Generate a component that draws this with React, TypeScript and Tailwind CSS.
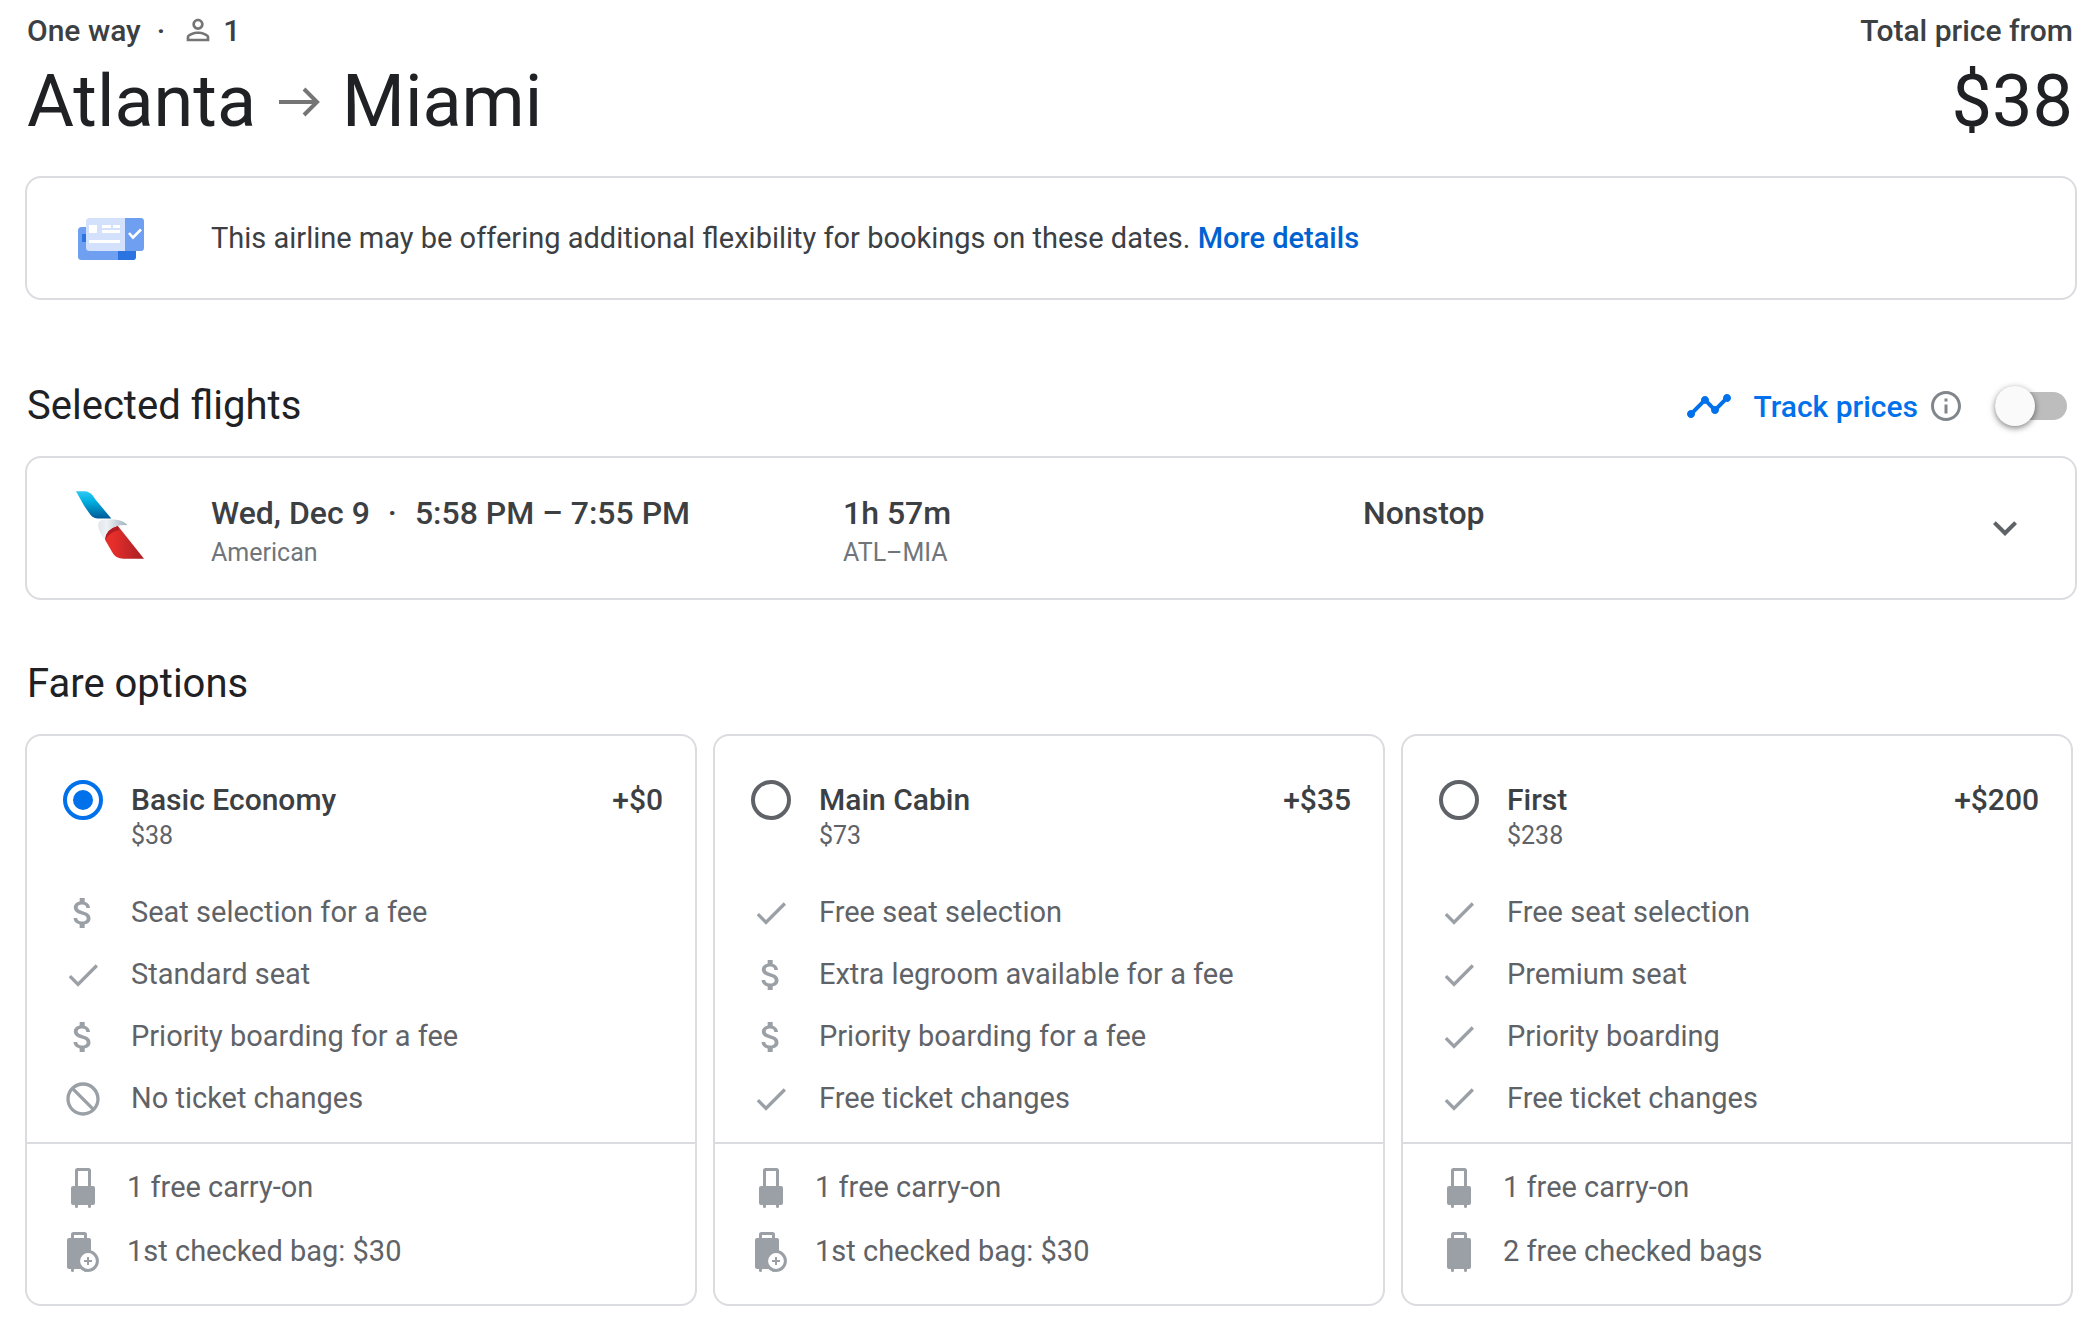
import { FunctionComponent, JSX, useState } from "react";

type Feature = { icon: "fee" | "included" | "none"; text: string };
type Bag = { icon: "carry" | "checked" | "checkedFee"; text: string };

interface Fare {
  id: string;
  name: string;
  price: string;
  extra: string;
  features: Feature[];
  bags: Bag[];
}

const fares: Fare[] = [
  {
    id: "basic",
    name: "Basic Economy",
    price: "$38",
    extra: "+$0",
    features: [
      { icon: "fee", text: "Seat selection for a fee" },
      { icon: "included", text: "Standard seat" },
      { icon: "fee", text: "Priority boarding for a fee" },
      { icon: "none", text: "No ticket changes" },
    ],
    bags: [
      { icon: "carry", text: "1 free carry-on" },
      { icon: "checkedFee", text: "1st checked bag: $30" },
    ],
  },
  {
    id: "main",
    name: "Main Cabin",
    price: "$73",
    extra: "+$35",
    features: [
      { icon: "included", text: "Free seat selection" },
      { icon: "fee", text: "Extra legroom available for a fee" },
      { icon: "fee", text: "Priority boarding for a fee" },
      { icon: "included", text: "Free ticket changes" },
    ],
    bags: [
      { icon: "carry", text: "1 free carry-on" },
      { icon: "checkedFee", text: "1st checked bag: $30" },
    ],
  },
  {
    id: "first",
    name: "First",
    price: "$238",
    extra: "+$200",
    features: [
      { icon: "included", text: "Free seat selection" },
      { icon: "included", text: "Premium seat" },
      { icon: "included", text: "Priority boarding" },
      { icon: "included", text: "Free ticket changes" },
    ],
    bags: [
      { icon: "carry", text: "1 free carry-on" },
      { icon: "checked", text: "2 free checked bags" },
    ],
  },
];

const featurePaths: Record<Feature["icon"], string> = {
  fee: "M11.8 10.9c-2.27-.59-3-1.2-3-2.15 0-1.09 1.01-1.85 2.7-1.85 1.78 0 2.44.85 2.5 2.1h2.21c-.07-1.72-1.12-3.3-3.21-3.81V3h-3v2.16c-1.94.42-3.5 1.68-3.5 3.61 0 2.31 1.91 3.46 4.7 4.13 2.5.6 3 1.48 3 2.41 0 .69-.49 1.79-2.7 1.79-2.06 0-2.87-.92-2.98-2.1h-2.2c.12 2.19 1.76 3.42 3.68 3.83V21h3v-2.15c1.95-.37 3.5-1.5 3.5-3.55 0-2.84-2.43-3.81-4.7-4.4z",
  included: "M9 16.17L4.83 12l-1.42 1.41L9 19 21 7l-1.41-1.41z",
  none: "M12 2c5.52 0 10 4.48 10 10s-4.48 10-10 10S2 17.52 2 12 6.48 2 12 2zM20 12c0-4.42-3.58-8-8-8-1.85 0-3.55.63-4.9 1.69L18.31 16.9C19.37 15.55 20 13.85 20 12zm-8 8c1.85 0 3.55-.63 4.9-1.69L5.69 7.1C4.63 8.45 4 10.15 4 12c0 4.42 3.58 8 8 8z",
};

const FeatureIcon: FunctionComponent<{ icon: Feature["icon"] }> = ({
  icon,
}): JSX.Element => (
  <svg
    viewBox="0 0 24 24"
    className="size-10 shrink-0 fill-[#9aa0a6]"
    aria-hidden="true"
  >
    <path d={featurePaths[icon]} />
  </svg>
);

const BagIcon: FunctionComponent<{ icon: Bag["icon"] }> = ({
  icon,
}): JSX.Element => {
  if (icon === "carry") {
    return (
      <svg
        viewBox="0 0 40 40"
        className="size-10 shrink-0 fill-[#9aa0a6]"
        aria-hidden="true"
      >
        <path d="M14.5 0h11a2.5 2.5 0 0 1 2.5 2.5V18h2a2 2 0 0 1 2 2v15a2 2 0 0 1-2 2h-2v1.5a1.5 1.5 0 0 1-3 0V37H15v1.5a1.5 1.5 0 0 1-3 0V37h-2a2 2 0 0 1-2-2V20a2 2 0 0 1 2-2h2V2.5A2.5 2.5 0 0 1 14.5 0zM15 3v15h10V3z" />
      </svg>
    );
  }
  return (
    <svg
      viewBox="0 0 40 40"
      className="size-10 shrink-0 fill-[#9aa0a6]"
      aria-hidden="true"
    >
      <g transform={icon === "checkedFee" ? "translate(-4 0)" : undefined}>
        <path d="M14.5 0h11A2.5 2.5 0 0 1 28 2.5V6h2a2 2 0 0 1 2 2v27a2 2 0 0 1-2 2h-2v1.5a1.5 1.5 0 0 1-3 0V37H15v1.5a1.5 1.5 0 0 1-3 0V37h-2a2 2 0 0 1-2-2V8a2 2 0 0 1 2-2h2V2.5A2.5 2.5 0 0 1 14.5 0zM15 3v3h10V3z" />
      </g>
      {icon === "checkedFee" && (
        <>
          <circle
            cx="25"
            cy="29"
            r="9.4"
            fill="#fff"
            stroke="#9aa0a6"
            strokeWidth="3"
          />
          <path d="M24 25h2v3h3v2h-3v3h-2v-3h-3v-2h3z" />
        </>
      )}
    </svg>
  );
};

const TicketIcon: FunctionComponent = (): JSX.Element => (
  <svg viewBox="0 0 66 42" className="h-[42px] w-[66px]" aria-hidden="true">
    <rect y="9" width="58" height="33" rx="3.5" fill="#6f9ff0" />
    <path d="M40 30h18v8.5a3.5 3.5 0 0 1-3.5 3.5H40z" fill="#2a73e0" />
    <path d="M4 16h5v8H4z" fill="#2a73e0" />
    <rect x="8" width="58" height="33" rx="3.5" fill="#d3e1fc" />
    <path
      d="M47 0h15.5A3.5 3.5 0 0 1 66 3.5v26a3.5 3.5 0 0 1-3.5 3.5H47z"
      fill="#6f9ff0"
    />
    <path
      d="M11 7h8v8h-8zM24 7h9v3h-9zM35 7h7v3h-7zM24 12h18v3H24zM11 22h31v3H11z"
      fill="#fff"
    />
    <path
      d="M51 15l4 4.5 8-8"
      fill="none"
      stroke="#fff"
      strokeWidth="2.6"
    />
  </svg>
);

const AmericanLogo: FunctionComponent = (): JSX.Element => (
  <svg
    viewBox="47 33 206 204"
    className="size-[68px]"
    role="img"
    aria-label="American"
  >
    <defs>
      <linearGradient id="aaBlue" x1="0" y1="0" x2="0" y2="1">
        <stop offset="0" stopColor="#30c8f4" />
        <stop offset="0.35" stopColor="#00b2e3" />
        <stop offset="1" stopColor="#005a96" />
      </linearGradient>
      <linearGradient id="aaGrey" x1="0" y1="0" x2="1" y2="0">
        <stop offset="0" stopColor="#dfe6ec" />
        <stop offset="0.3" stopColor="#eff2f5" />
        <stop offset="1" stopColor="#9db0bb" />
      </linearGradient>
      <linearGradient id="aaRed" x1="0" y1="0" x2="1" y2="0">
        <stop offset="0.2" stopColor="#e62e2b" />
        <stop offset="1" stopColor="#a81f24" />
      </linearGradient>
    </defs>
    <path
      d="M47 33H73Q88 34 97 45Q102 52 106 58L154 115H112Q96 113 88 100Q76 84 69 72Z"
      fill="url(#aaBlue)"
    />
    <path
      d="M114 138Q112 119 136 118H164Q194 121 203 136Q188 133 174 138Q140 146 135 180Q118 160 114 138Z"
      fill="url(#aaGrey)"
    />
    <path
      d="M174 138L253 237H190Q169 236 159 221L135 180Q138 148 174 138Z"
      fill="url(#aaRed)"
    />
    <path d="M174 138Q137 147 135 180Q149 155 179 150Z" fill="#b01c22" />
  </svg>
);

const FareCard: FunctionComponent<{
  fare: Fare;
  selected: boolean;
  onSelect: () => void;
}> = ({ fare, selected, onSelect }): JSX.Element => {
  return (
    <div className="flex flex-col rounded-2xl border-2 border-[#dadce0]">
      <div className="flex flex-col pt-11 pr-8 pb-3 pl-9">
        <label className="flex cursor-pointer items-start gap-7">
          <input
            type="radio"
            name="fare"
            checked={selected}
            onChange={onSelect}
            className="size-10 shrink-0 appearance-none rounded-full border-4 border-[#5f6368] checked:border-[#0071eb] checked:bg-[#0071eb] checked:bg-clip-content checked:p-[6px]"
          />
          <span className="flex grow flex-col">
            <span className="flex justify-between text-[30px] leading-10 font-medium text-[#3c4043]">
              <span>{fare.name}</span>
              <span>{fare.extra}</span>
            </span>
            <span className="text-[25px] leading-8 text-[#5f6368]">
              {fare.price}
            </span>
          </span>
        </label>
        <ul className="flex flex-col pt-[30px] text-[#5f6368]">
          {fare.features.map((feature) => (
            <li
              key={feature.text}
              className="flex h-[62px] items-center gap-7 text-[29px]"
            >
              <FeatureIcon icon={feature.icon} />
              {feature.text}
            </li>
          ))}
        </ul>
      </div>
      <ul className="flex flex-col border-t-2 border-[#dadce0] px-9 pt-3 pb-5 text-[#5f6368]">
        {fare.bags.map((bag) => (
          <li
            key={bag.text}
            className="flex h-16 items-center gap-6 text-[29px]"
          >
            <BagIcon icon={bag.icon} />
            {bag.text}
          </li>
        ))}
      </ul>
    </div>
  );
};

export default function App(): JSX.Element {
  const [fare, setFare] = useState<string>("basic");
  const [tracking, setTracking] = useState<boolean>(false);

  return (
    <main className="w-full bg-white pr-[13px] pb-3 pl-[25px] font-['Roboto',sans-serif] text-[#202124]">
      <header className="flex justify-between pt-3 pr-1 pl-0.5">
        <div className="flex flex-col">
          <div className="flex h-9 items-center text-[30px] font-medium text-[#3c4043]">
            <span>One way</span>
            <span className="px-4">·</span>
            <svg
              viewBox="0 0 24 24"
              className="size-[34px] fill-[#757575]"
              aria-hidden="true"
            >
              <path d="M12 5.9c1.16 0 2.1.94 2.1 2.1s-.94 2.1-2.1 2.1S9.9 9.16 9.9 8s.94-2.1 2.1-2.1m0 9c2.97 0 6.1 1.46 6.1 2.1v1.1H5.9V17c0-.64 3.13-2.1 6.1-2.1M12 4C9.79 4 8 5.79 8 8s1.79 4 4 4 4-1.79 4-4-1.79-4-4-4zm0 9c-2.67 0-8 1.34-8 4v3h16v-3c0-2.66-5.33-4-8-4z" />
            </svg>
            <span className="pl-2">1</span>
          </div>
          <h1 className="flex h-[108px] items-center gap-[22px] text-7xl">
            <span>Atlanta</span>
            <svg
              viewBox="0 0 42 30"
              className="h-[30px] w-[42px] fill-none stroke-[#757575] stroke-[4]"
              aria-hidden="true"
            >
              <path d="M1 15H39M26 2L39 15L26 28" />
            </svg>
            <span>Miami</span>
          </h1>
        </div>
        <div className="flex flex-col items-end">
          <span className="flex h-9 items-center text-[30px] font-medium text-[#3c4043]">
            Total price from
          </span>
          <span className="flex h-[108px] items-center text-7xl">$38</span>
        </div>
      </header>

      <section className="mt-5 flex h-[124px] items-center gap-[67px] rounded-2xl border-2 border-[#dadce0] pt-0.5 pl-[51px] text-[29px] text-[#3c4043]">
        <TicketIcon />
        <p>
          This airline may be offering additional flexibility for bookings on
          these dates.{" "}
          <a href="#details" className="font-medium text-[#0062d1]">
            More details
          </a>
        </p>
      </section>

      <div className="mt-[78px] flex h-14 items-center justify-between pr-[10px] pl-0.5">
        <h2 className="text-[40px]">Selected flights</h2>
        <div className="flex items-center">
          <svg
            viewBox="0 0 24 24"
            className="size-12 fill-[#0071eb]"
            aria-hidden="true"
          >
            <path d="M23 8c0 1.1-.9 2-2 2-.18 0-.35-.02-.51-.07l-3.56 3.55c.05.16.07.34.07.52 0 1.1-.9 2-2 2s-2-.9-2-2c0-.18.02-.36.07-.52l-2.55-2.55c-.16.05-.34.07-.52.07s-.36-.02-.52-.07l-4.55 4.56c.05.16.07.33.07.51 0 1.1-.9 2-2 2s-2-.9-2-2 .9-2 2-2c.18 0 .35.02.51.07l4.56-4.55C8.02 9.36 8 9.18 8 9c0-1.1.9-2 2-2s2 .9 2 2c0 .18-.02.36-.07.52l2.55 2.55c.16-.05.34-.07.52-.07s.36.02.52.07l3.55-3.56C19.02 8.35 19 8.18 19 8c0-1.1.9-2 2-2s2 .9 2 2z" />
          </svg>
          <label
            htmlFor="track"
            className="cursor-pointer pl-5 text-[30px] font-medium text-[#0071eb]"
          >
            Track prices
          </label>
          <button
            type="button"
            aria-label="About price tracking"
            className="ml-2.5 cursor-pointer"
          >
            <svg
              viewBox="0 0 24 24"
              className="size-9 fill-[#80868b]"
              aria-hidden="true"
            >
              <path d="M11 7h2v2h-2zm0 4h2v6h-2zm1-9C6.48 2 2 6.48 2 12s4.48 10 10 10 10-4.48 10-10S17.52 2 12 2zm0 18c-4.41 0-8-3.59-8-8s3.59-8 8-8 8 3.59 8 8-3.59 8-8 8z" />
            </svg>
          </button>
          <span className="relative ml-[31px] flex h-10 w-[72px] items-center">
            <input
              id="track"
              type="checkbox"
              role="switch"
              checked={tracking}
              onChange={(e) => setTracking(e.target.checked)}
              className="peer h-7 w-full cursor-pointer appearance-none rounded-full bg-[#bdbdbd] checked:bg-[#8ab4f8]"
            />
            <span className="pointer-events-none absolute left-0 size-10 rounded-full bg-[#fafafa] shadow-[0_2px_6px_rgba(0,0,0,0.5)] peer-checked:right-0 peer-checked:left-auto peer-checked:bg-[#0071eb]" />
          </span>
        </div>
      </div>

      <section className="mt-[22px] grid h-36 grid-cols-[184px_632fr_520fr_618fr_94px] items-start rounded-2xl border-2 border-[#dadce0]">
        <div className="pt-[33px] pl-[49px]">
          <AmericanLogo />
        </div>
        <div className="flex flex-col pt-[35px]">
          <span className="flex text-[32px] leading-10 font-medium text-[#3c4043]">
            <span>Wed, Dec 9</span>
            <span className="px-[18px]">·</span>
            <span>5:58 PM – 7:55 PM</span>
          </span>
          <span className="text-[25px] leading-10 text-[#70757a]">
            American
          </span>
        </div>
        <div className="flex flex-col pt-[35px]">
          <span className="text-[32px] leading-10 font-medium text-[#3c4043]">
            1h 57m
          </span>
          <span className="text-[25px] leading-10 text-[#70757a]">ATL–MIA</span>
        </div>
        <div className="pt-[35px] text-[32px] leading-10 font-medium text-[#3c4043]">
          Nonstop
        </div>
        <button
          type="button"
          aria-label="Show flight details"
          className="cursor-pointer self-center"
        >
          <svg
            viewBox="0 0 24 24"
            className="size-12 fill-[#5f6368]"
            aria-hidden="true"
          >
            <path d="M16.59 8.59L12 13.17 7.41 8.59 6 10l6 6 6-6z" />
          </svg>
        </button>
      </section>

      <h2 className="mt-14 flex h-14 items-center pl-0.5 text-[40px]">
        Fare options
      </h2>
      <section
        className="mt-[22px] mr-1 grid grid-cols-3 gap-4"
        aria-label="Fare options"
      >
        {fares.map((item) => (
          <FareCard
            key={item.id}
            fare={item}
            selected={fare === item.id}
            onSelect={() => setFare(item.id)}
          />
        ))}
      </section>
    </main>
  );
}
